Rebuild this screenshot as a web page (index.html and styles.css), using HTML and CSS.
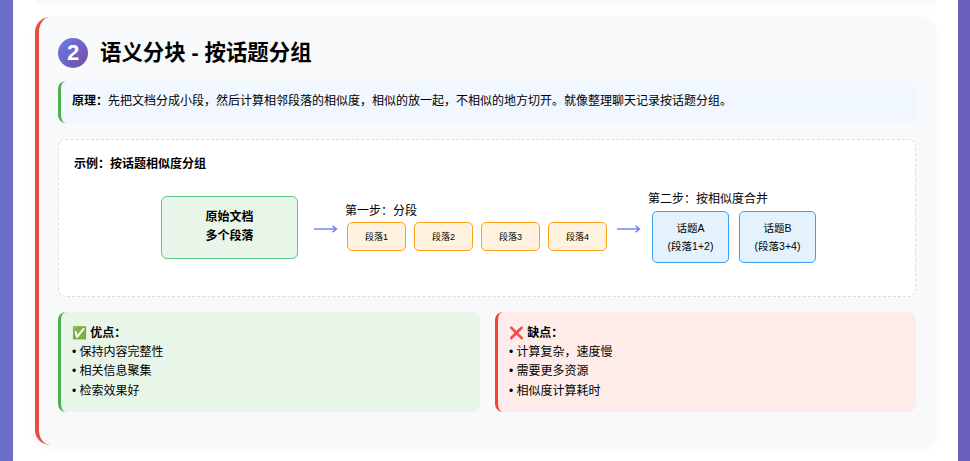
FILE: index.html
```html
<!DOCTYPE html>
<html lang="zh-CN">
<head>
<meta charset="utf-8">
<title>语义分块</title>
<link rel="stylesheet" href="styles.css">
</head>
<body>
<main class="panel">
  <div class="prev-card"></div>
  <section class="card">
    <h2 class="heading"><span class="num">2</span>语义分块 - 按话题分组</h2>
    <p class="principle"><strong>原理：</strong>先把文档分成小段，然后计算相邻段落的相似度，相似的放一起，不相似的地方切开。就像整理聊天记录按话题分组。</p>
    <div class="example">
      <h3 class="example-title">示例：按话题相似度分组</h3>
      <div class="flow">
        <div class="doc">原始文档<br>多个段落</div>
        <svg class="arrow arrow-a" width="24" height="10" viewBox="0 0 24 10"><path d="M0 5H22M18.500 1.800L22.500 5L18.500 8.200" fill="none" stroke="#7488ea" stroke-width="1.500"/></svg>
        <div class="step step-one">
          <div class="step-label">第一步：分段</div>
          <div class="segs">
            <div class="seg">段落1</div>
            <div class="seg">段落2</div>
            <div class="seg">段落3</div>
            <div class="seg">段落4</div>
          </div>
        </div>
        <svg class="arrow arrow-b" width="24" height="10" viewBox="0 0 24 10"><path d="M0 5H22M18.500 1.800L22.500 5L18.500 8.200" fill="none" stroke="#7488ea" stroke-width="1.500"/></svg>
        <div class="step step-two">
          <div class="step-label">第二步：按相似度合并</div>
          <div class="topics">
            <div class="topic">话题A<br>(段落1+2)</div>
            <div class="topic">话题B<br>(段落3+4)</div>
          </div>
        </div>
      </div>
    </div>
    <div class="compare">
      <div class="box pros">
        <strong>✅ 优点：</strong><br>
        • 保持内容完整性<br>
        • 相关信息聚集<br>
        • 检索效果好
      </div>
      <div class="box cons">
        <strong>❌ 缺点：</strong><br>
        • 计算复杂，速度慢<br>
        • 需要更多资源<br>
        • 相似度计算耗时
      </div>
    </div>
  </section>
</main>
</body>
</html>
```
FILE: styles.css
```css
* { box-sizing: border-box; }
html, body { margin: 0; height: 461px; overflow: hidden; }
body {
  background: linear-gradient(90deg, #6a6dc9 0%, #6b60bb 100%);
  font-family: "Liberation Sans", "Noto Sans CJK SC", sans-serif;
  color: #000;
}
.panel {
  width: 945px;
  height: 461px;
  margin-left: 13px;
  padding: 0 22px 0 22px;
  background: #fff;
  overflow: hidden;
}
.prev-card {
  height: 3px;
  margin-bottom: 14px;
  background: #f8f9fa;
  border-radius: 0 0 15px 15px;
  box-shadow: 0 3px 10px rgba(0, 0, 0, .04);
}
.card {
  height: 428px;
  padding: 21px 20px 0 19px;
  background: #f8f9fa;
  border-left: 4px solid #e74c3c;
  border-radius: 15px;
  box-shadow: 0 3px 10px rgba(0, 0, 0, .04);
}
.heading {
  display: flex;
  align-items: center;
  height: 30px;
  margin: 0 0 13px;
  font-size: 21.400px;
  font-weight: 700;
  line-height: 26px;
}
.num {
  display: flex;
  align-items: center;
  justify-content: center;
  width: 30px;
  height: 30px;
  margin-right: 12px;
  border-radius: 50%;
  background: linear-gradient(135deg, #667eea, #764ba2);
  color: #fff;
  font-size: 22px;
}
.principle {
  height: 42px;
  margin: 0 0 16px;
  padding: 0 11px;
  background: #f0f7ff;
  border-left: 3px solid #4caf50;
  border-radius: 8px;
  font-size: 12px;
  line-height: 40px;
}
.example {
  height: 158px;
  margin-bottom: 15px;
  padding: 15px;
  background: #fff;
  border: 1px dashed #ddd;
  border-radius: 8px;
}
.example-title {
  margin: 0 0 15px;
  font-size: 12px;
  font-weight: 700;
  line-height: 18px;
}
.flow {
  display: flex;
  align-items: center;
  padding-left: 87px;
  height: 78px;
}
.doc {
  flex: none;
  width: 137px;
  height: 63px;
  padding-top: 11px;
  background: #e8f5e9;
  border: 1px solid #5cc58a;
  border-radius: 6px;
  font-size: 12px;
  font-weight: 700;
  line-height: 19.500px;
  text-align: center;
}
.arrow { flex: none; }
.arrow-a { margin: 4px 7px 0 16px; }
.arrow-b { margin: 4px 7px 0 8px; }
.step { flex: none; }
.step-label {
  font-size: 12px;
  line-height: 16px;
}
.step-one { margin-top: -1px; }
.step-one .step-label { margin-bottom: 3px; }
.step-two .step-label { margin-bottom: 4px; }
.segs { display: flex; gap: 8px; padding: 0 2px; }
.seg {
  width: 59px;
  height: 29px;
  background: #fff3e0;
  border: 1px solid #ff9f1c;
  border-radius: 5px;
  font-size: 9px;
  line-height: 28px;
  text-align: center;
}
.topics { display: flex; gap: 10px; padding-left: 4px; }
.topic {
  width: 77px;
  height: 52px;
  padding-top: 7px;
  background: #e3f2fd;
  border: 1px solid #3b9ff5;
  border-radius: 5px;
  font-size: 10.500px;
  line-height: 18px;
  text-align: center;
}
.compare { display: flex; gap: 15px; }
.box {
  height: 100px;
  padding: 12px 11px;
  border-radius: 8px;
  font-size: 12px;
  line-height: 19.200px;
}
.pros { width: 422px; background: #e8f5e9; border-left: 3px solid #4caf50; }
.cons { width: 421px; background: #fdecea; border-left: 3px solid #f44336; }
```
